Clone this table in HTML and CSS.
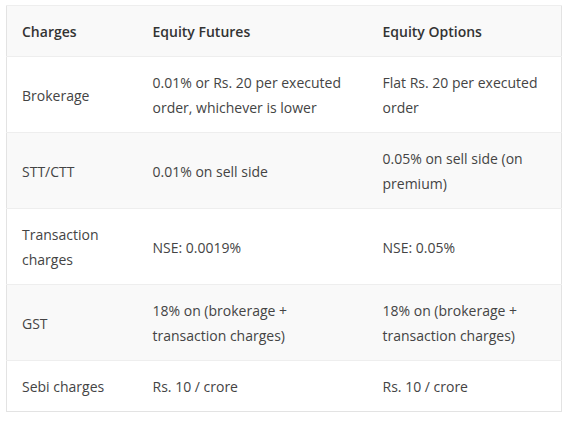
FILE: index.html
```html
<!DOCTYPE html>
<html lang='en'>

<head>
  <meta charset='UTF-8'>
  <meta name='viewport' content='width=device-width, initial-scale=1.0'>
  <title>F&amp;O Charges</title>
  <link rel="stylesheet" href="styles.css">
</head>

<body>
  <table class='charges'>
    <thead>
      <tr>
        <th class='col-name'>Charges</th>
        <th class='col-fut'>Equity Futures</th>
        <th class='col-opt'>Equity Options</th>
      </tr>
    </thead>
    <tbody>
      <tr>
        <td>Brokerage</td>
        <td>0.01% or Rs. 20 per executed order, whichever is lower</td>
        <td>Flat Rs. 20 per executed order</td>
      </tr>
      <tr>
        <td>STT/CTT</td>
        <td>0.01% on sell side</td>
        <td>0.05% on sell side (on premium)</td>
      </tr>
      <tr>
        <td>Transaction charges</td>
        <td>NSE: 0.0019%</td>
        <td>NSE: 0.05%</td>
      </tr>
      <tr>
        <td>GST</td>
        <td>18% on (brokerage + transaction charges)</td>
        <td>18% on (brokerage + transaction charges)</td>
      </tr>
      <tr>
        <td>Sebi charges</td>
        <td>Rs. 10 / crore</td>
        <td>Rs. 10 / crore</td>
      </tr>
    </tbody>
  </table>
</body>

</html>
```

FILE: styles.css
```css
html {
  margin: 0;
}

body {
  margin: 0;
  padding: 5px 0 0 6px;
  background-color: #fff;
  font-family: 'Open Sans', 'Liberation Sans', sans-serif;
  font-size: 14px;
  color: #444;
}

.charges {
  width: 556px;
  border-collapse: collapse;
  border: 1px solid #e3e3e3;
  table-layout: fixed;
}

.charges th,
.charges td {
  box-sizing: border-box;
  text-align: left;
  vertical-align: middle;
  padding: 13px 15px 12px;
  line-height: 25px;
  border-top: 1px solid #eeeeee;
}

.charges th {
  font-weight: 600;
  color: #333;
  background-color: #f9f9f9;
}

.charges tbody tr:nth-child(even) td {
  background-color: #f9f9f9;
}

.col-name {
  width: 131px;
}

.col-fut {
  width: 230px;
}

.col-opt {
  width: auto;
}
```
